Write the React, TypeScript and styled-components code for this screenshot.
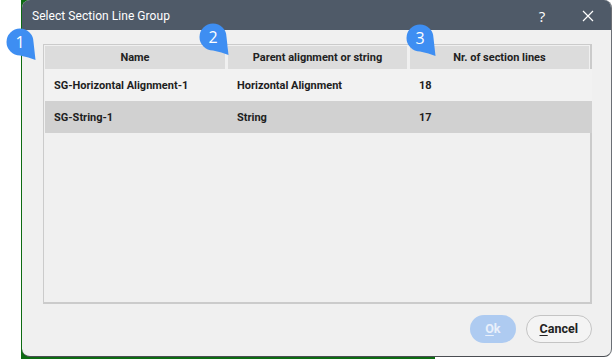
import React from "react";
import styled, { createGlobalStyle } from "styled-components";

const GlobalStyle = createGlobalStyle`
  html, body {
    margin: 0;
    padding: 0;
    background: #ffffff;
    font-family: Roboto, "Liberation Sans", sans-serif;
  }
  * { box-sizing: border-box; }
`;

type Row = { name: string; parent: string; count: number; selected?: boolean };

const rows: Row[] = [
  { name: "SG-Horizontal Alignment-1", parent: "Horizontal Alignment", count: 18 },
  { name: "SG-String-1", parent: "String", count: 17, selected: true },
];

const Stage = styled.div`
  position: relative;
  width: 614px;
  height: 359px;
  overflow: hidden;
`;

const BackWindow = styled.div`
  position: absolute;
  left: 21px;
  top: -10px;
  width: 414px;
  height: 369px;
  background: #0d6b12;
`;

const Dialog = styled.div`
  position: relative;
  margin-left: 22px;
  width: 590px;
  height: 357px;
  display: flex;
  flex-direction: column;
  background: #f0f0f0;
  border-radius: 8px;
  border-right: 1px solid #6b6f75;
  border-bottom: 1px solid #4a4d52;
  overflow: hidden;
`;

const TitleBar = styled.div`
  height: 30px;
  flex: none;
  display: flex;
  align-items: center;
  padding: 1px 0 0 10px;
  background: #4f5a68;
  color: #ffffff;
  font-size: 12px;
`;

const Title = styled.div`
  flex: 1;
  letter-spacing: 0.05px;
`;

const TitleButton = styled.div`
  width: 46px;
  height: 30px;
  display: flex;
  align-items: center;
  justify-content: center;
  color: #ffffff;
  font-size: 15px;
  font-family: "Open Sans", sans-serif;
`;

const Body = styled.div`
  flex: 1;
  display: flex;
  flex-direction: column;
  padding: 14px 19px 4px 21px;
`;

const TableFrame = styled.div`
  height: 260px;
  border: 1px solid #cbcbcb;
  border-width: 1px 2px 2px 1px;
  padding: 1px 0 0 1px;
  display: flex;
  flex-direction: column;
`;

const Grid = styled.div`
  display: grid;
  grid-template-columns: 183px 182px 182px;
`;

const HeaderCell = styled.div`
  height: 23px;
  margin-right: 3px;
  background: #dcdcdc;
  display: flex;
  align-items: center;
  justify-content: center;
  font-size: 11px;
  font-weight: 700;
  color: #222222;
  &:last-child { margin-right: 1px; }
`;

const Cell = styled.div<{ $selected?: boolean }>`
  height: 32px;
  display: flex;
  align-items: center;
  padding-left: 9px;
  background: ${(p) => (p.$selected ? "#d1d1d1" : "#f2f2f2")};
  font-size: 11px;
  font-weight: 700;
  color: #1e1e1e;
`;

const Footer = styled.div`
  flex: 1;
  display: flex;
  justify-content: flex-end;
  align-items: center;
  gap: 10px;
  padding-top: 1px;
`;

const Button = styled.div<{ $primary?: boolean }>`
  height: 28px;
  padding: 0 ${(p) => (p.$primary ? "15px" : "13px")};
  border-radius: 14px;
  display: flex;
  align-items: center;
  font-size: 12.5px;
  font-weight: 700;
  background: ${(p) => (p.$primary ? "#aecbf1" : "#f4f4f4")};
  color: ${(p) => (p.$primary ? "#e9f0fb" : "#222222")};
  border: ${(p) => (p.$primary ? "none" : "1.5px solid #c4c4c4")};
  u { text-decoration: underline; text-underline-offset: 2px; }
`;

const Badge = styled.div<{ $x: number; $y: number }>`
  position: absolute;
  left: ${(p) => p.$x}px;
  top: ${(p) => p.$y}px;
  width: 32px;
  height: 34px;
`;

const BadgeNumber = styled.span`
  position: absolute;
  left: 0;
  top: 0;
  width: 28px;
  height: 28px;
  display: flex;
  align-items: center;
  justify-content: center;
  color: #ffffff;
  font-size: 16px;
  font-family: "Open Sans", sans-serif;
`;

const Callout = ({ n, x, y }: { n: number; x: number; y: number }) => (
  <Badge $x={x} $y={y}>
    <svg width="32" height="34" viewBox="0 0 32 34">
      <path
        d="M27.5 14 A13.5 13.5 0 1 0 14 27.5 Q23 29 29.5 32 Q28.5 23 27.5 14 Z"
        fill="#3e8ef2"
      />
    </svg>
    <BadgeNumber>{n}</BadgeNumber>
  </Badge>
);

export default function App() {
  return (
    <Stage>
      <GlobalStyle />
      <BackWindow />
      <Dialog>
        <TitleBar>
          <Title>Select Section Line Group</Title>
          <TitleButton>?</TitleButton>
          <TitleButton>
            <svg width="12" height="12" viewBox="0 0 12 12">
              <path d="M1 1 L11 11 M11 1 L1 11" stroke="#ffffff" strokeWidth="1.2" />
            </svg>
          </TitleButton>
        </TitleBar>
        <Body>
          <TableFrame>
            <Grid>
              <HeaderCell>Name</HeaderCell>
              <HeaderCell>Parent alignment or string</HeaderCell>
              <HeaderCell>Nr. of section lines</HeaderCell>
              {rows.map((r) => (
                <React.Fragment key={r.name}>
                  <Cell $selected={r.selected}>{r.name}</Cell>
                  <Cell $selected={r.selected}>{r.parent}</Cell>
                  <Cell $selected={r.selected}>{r.count}</Cell>
                </React.Fragment>
              ))}
            </Grid>
          </TableFrame>
          <Footer>
            <Button $primary>
              <span><u>O</u>k</span>
            </Button>
            <Button>
              <span><u>C</u>ancel</span>
            </Button>
          </Footer>
        </Body>
      </Dialog>
      <Callout n={1} x={6} y={28} />
      <Callout n={2} x={199} y={23} />
      <Callout n={3} x={406} y={24} />
    </Stage>
  );
}
